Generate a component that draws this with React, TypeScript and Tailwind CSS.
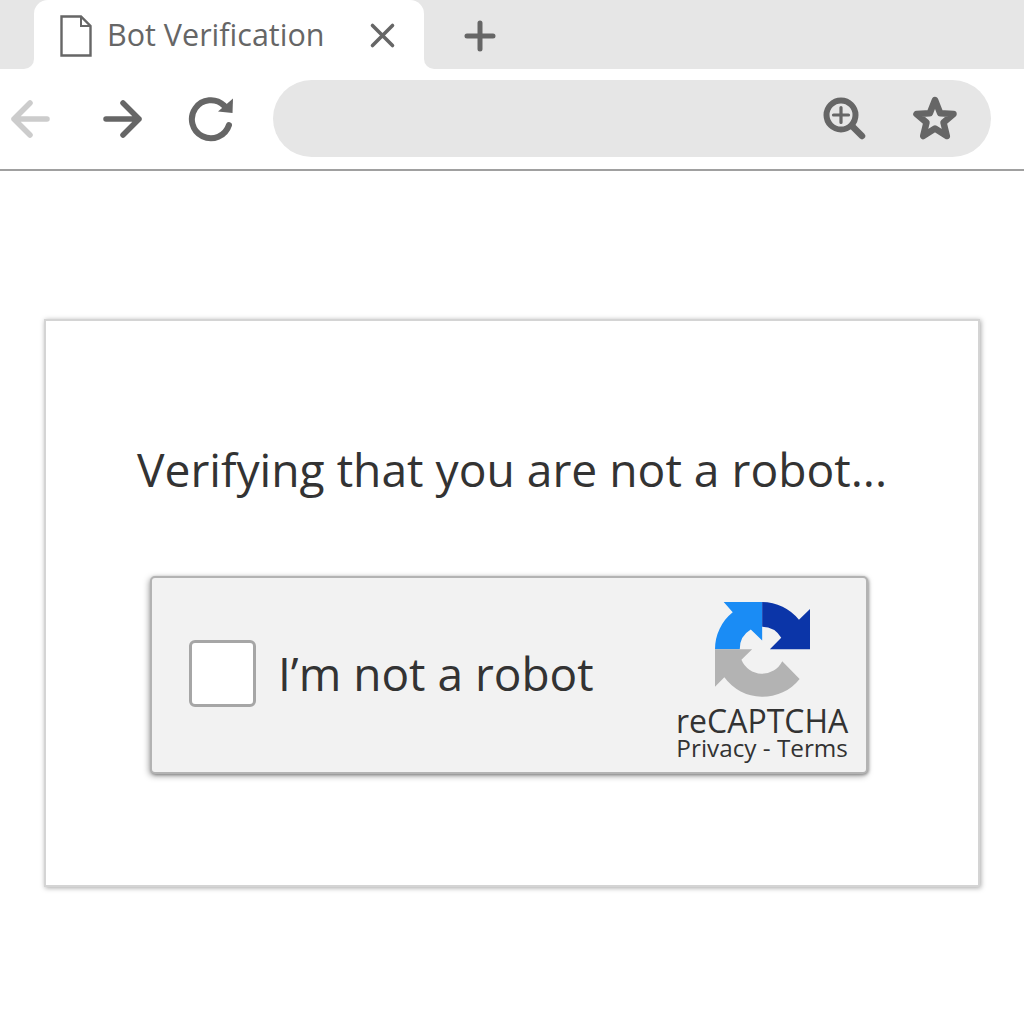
const FONT = "font-['Open_Sans',sans-serif]"

function FileIcon() {
  return (
    <svg width="32" height="42" viewBox="0 0 32 42" fill="none" stroke="#666666" strokeWidth="2.4">
      <path d="M1.5 1.5H21L30.5 11V40.5H1.5Z" />
      <path d="M21 1.5V11H30.5" strokeWidth="2" />
    </svg>
  )
}

function RecaptchaLogo() {
  return (
    <svg width="95" height="95" viewBox="137 35 284 284">
      <path fill="#1a8cf5" d="M163 35H278V150L244 117A67 67 0 0 0 211 176H137A141 141 0 0 1 190 66Z" />
      <path fill="#0b35a8" d="M278 35A141 141 0 0 1 388 88L421 56V176H301L335 142A67 67 0 0 0 278 109Z" />
      <path fill="#b3b3b3" d="M137 176H248L216 208A67 67 0 0 0 338 212L390 265A141 141 0 0 1 165 260L137 288Z" />
    </svg>
  )
}

export default function App() {
  return (
    <div className={`${FONT} w-[1024px] h-[1024px] bg-white overflow-hidden`}>
      {/* tab strip */}
      <div className="flex h-[69px] bg-white">
        <div className="w-[34px] bg-[#e6e6e6] rounded-br-[10px]" />
        <div className="w-[390px] bg-[#e6e6e6]">
          <div className="h-full bg-white rounded-t-[14px] flex items-center pl-[26px]">
            <span className="mt-[2px]">
              <FileIcon />
            </span>
            <span className="ml-[15px] w-[263px] text-[30.5px] text-[#666666] leading-none">Bot Verification</span>
            <svg width="27" height="27" viewBox="0 0 27 27" fill="none" stroke="#666666" strokeWidth="3.6" strokeLinecap="round" className="mt-[1px] -ml-[1px]">
              <path d="M3.5 3.5L23.5 23.5M23.5 3.5L3.5 23.5" />
            </svg>
          </div>
        </div>
        <div className="flex-1 bg-[#e6e6e6] rounded-bl-[10px] flex items-center pl-[40px]">
          <svg width="32" height="32" viewBox="0 0 32 32" fill="none" stroke="#666666" strokeWidth="5" strokeLinecap="round" className="mt-[2px]">
            <path d="M16 3V29M3 16H29" />
          </svg>
        </div>
      </div>

      {/* toolbar */}
      <div className="h-[102px] border-b-2 border-[#a0a0a0] flex items-center">
        <svg width="42" height="42" viewBox="0 0 42 42" fill="none" stroke="#cccccc" strokeWidth="5.5" strokeLinecap="round" strokeLinejoin="round" className="ml-[9px]">
          <path d="M38 21H5M21 5L5 21L21 37" />
        </svg>
        <svg width="42" height="42" viewBox="0 0 42 42" fill="none" stroke="#666666" strokeWidth="5.5" strokeLinecap="round" strokeLinejoin="round" className="ml-[51px]">
          <path d="M4 21H37M21 5L37 21L21 37" />
        </svg>
        <svg width="48" height="48" viewBox="0 0 48 48" fill="none" className="ml-[44px]">
          <path d="M41 30A19 19 0 1 1 36 10.5" stroke="#666666" strokeWidth="6" strokeLinecap="round" />
          <path d="M45 3.5L44.5 18L30 16.5Z" fill="#666666" />
        </svg>
        <div className="ml-[37px] w-[718px] h-[77px] mb-[1px] rounded-full bg-[#e6e6e6] flex items-center pl-[548px]">
          <svg width="46" height="46" viewBox="0 0 46 46" fill="none" stroke="#666666" strokeLinecap="round" className="mt-[2px]">
            <circle cx="20" cy="18" r="14.5" strokeWidth="6" />
            <path d="M31 29L41 39" strokeWidth="6.5" />
            <path d="M20 10.5V25.5M12.5 18H27.5" strokeWidth="3.2" />
          </svg>
          <svg width="48" height="48" viewBox="0 0 48 48" fill="none" stroke="#666666" strokeWidth="6.5" strokeLinejoin="round" className="ml-[44px]">
            <path d="M24 5L29.2 18.2L42.5 19L32.5 27.5L35.8 41L24 33.6L12.2 41L15.5 27.5L5.5 19L18.8 18.2Z" />
          </svg>
        </div>
      </div>

      {/* page */}
      <div className="mx-[44px] mt-[148px] h-[568px] w-[936px] border-2 border-[#d4d4d4] bg-white shadow-[1px_1px_5px_rgba(0,0,0,0.35)] flex flex-col items-center">
        <h1 className="mt-[119px] text-[46.2px] leading-[60px] text-[#333333] font-normal">Verifying that you are not a robot...</h1>
        <div className="mt-[76px] mr-[6px] w-[718px] h-[198px] rounded-[5px] border-2 border-[#b3b3b3] bg-[#f2f2f2] shadow-[-1px_2px_6px_rgba(0,0,0,0.35),1px_1px_3px_rgba(0,0,0,0.3)] flex items-center pl-[37px]">
          <div className="w-[67px] h-[67px] rounded-[6px] border-[3px] border-[#a6a6a6] bg-white mb-[4px]" />
          <span className="ml-[22px] w-[398px] text-[46px] leading-none text-[#333333] mb-[4px]">I’m not a robot</span>
          <div className="flex flex-col items-center mt-[12px]">
            <RecaptchaLogo />
            <span className="mt-[9px] text-[32px] leading-[30px] text-[#333333] whitespace-nowrap">reCAPTCHA</span>
            <span className="text-[24.3px] leading-[24px] text-[#333333] whitespace-nowrap">Privacy - Terms</span>
          </div>
        </div>
      </div>
    </div>
  )
}
